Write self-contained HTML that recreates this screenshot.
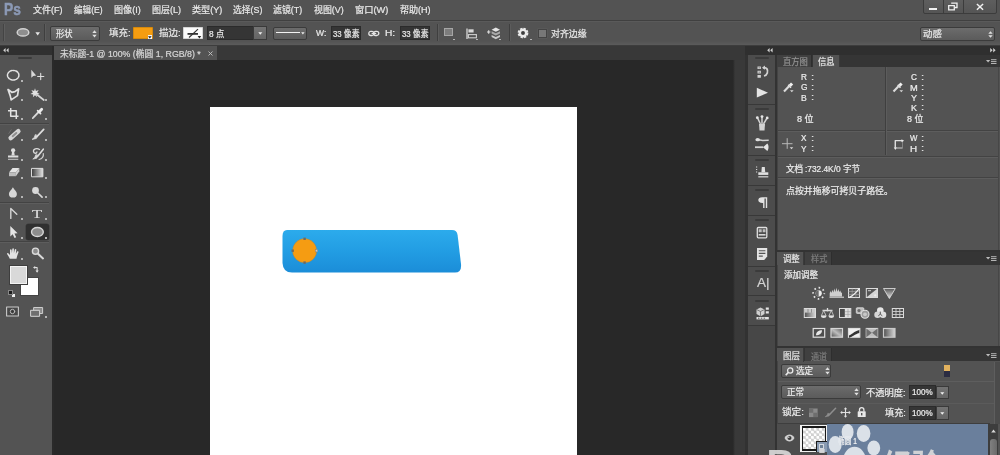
<!DOCTYPE html>
<html lang="zh-CN">
<head>
<meta charset="utf-8">
<title>Photoshop</title>
<style>
html,body{margin:0;padding:0;}
body{width:1000px;height:455px;overflow:hidden;background:#282828;position:relative;
 font-family:"Liberation Sans","Noto Sans CJK SC",sans-serif;font-size:9px;color:#e6e6e6;}
.a{position:absolute;box-sizing:border-box;}
.t{position:absolute;white-space:pre;line-height:40px;transform-origin:0 0;-webkit-text-stroke:0.22px currentColor;}
svg{position:absolute;overflow:visible;}
.dd{position:absolute;box-sizing:border-box;background:linear-gradient(#6c6c6c,#5b5b5b);border:1px solid #3b3b3b;border-radius:2px;}
.inp{position:absolute;box-sizing:border-box;background:#353535;border:1px solid #2b2b2b;}
.sep{position:absolute;width:1px;background:#3f3f3f;border-right:1px solid #5c5c5c;}
.hl{position:absolute;height:1px;background:#434343;border-bottom:1px solid #5d5d5d;}
.grip{position:absolute;height:2px;background:#3b3b3b;border-radius:1px;}
.dot{position:absolute;width:1.8px;height:1.8px;background:#b4b4b4;}
</style>
</head>
<body>
<div id="root" style="position:absolute;left:0;top:0;width:1000px;height:455px;overflow:hidden;will-change:transform;">
<!-- ===== base regions ===== -->
<div class="a" style="left:0;top:0;width:1000px;height:45px;background:#535353;"></div>
<div class="a" style="left:0;top:19.5px;width:1000px;height:1px;background:#404040;"></div>
<div class="a" style="left:0;top:20.5px;width:1000px;height:1px;background:#5a5a5a;"></div>
<div class="a" style="left:0;top:41px;width:1000px;height:3.5px;background:linear-gradient(#535353,#5b5b5b);"></div>
<div class="a" style="left:0;top:44.5px;width:1000px;height:1.5px;background:#3d3d3d;"></div>
<!-- doc tab bar -->
<div class="a" style="left:52px;top:46px;width:694px;height:14px;background:#383838;"></div>
<div class="a" style="left:54px;top:46px;width:163px;height:14px;background:#535353;"></div>
<!-- canvas scrollbar band -->
<div class="a" style="left:733px;top:60px;width:12px;height:395px;background:linear-gradient(90deg,#282828,#393939 2px,#393939);"></div>
<div class="a" style="left:745px;top:46px;width:4px;height:409px;background:#323232;"></div>
<!-- left toolbar -->
<div class="a" style="left:0;top:45.5px;width:52px;height:9.5px;background:#303030;"></div>
<div class="a" style="left:0;top:55px;width:51.5px;height:400px;background:#535353;"></div>
<div class="a" style="left:51.5px;top:46px;width:2.5px;height:409px;background:#2a2a2a;"></div>
<!-- document -->
<div class="a" style="left:209.8px;top:107px;width:367px;height:348px;background:#fff;"></div>
<!-- right dock -->
<div class="a" style="left:745px;top:45.5px;width:255px;height:9.5px;background:#2f2f2f;"></div>
<div class="a" style="left:748px;top:55px;width:26.6px;height:400px;background:#4c4c4c;"></div>
<div class="a" style="left:774.6px;top:55px;width:226px;height:400px;background:#333;"></div>

<!-- ===== menu bar ===== -->
<span class="t" style="left:4.39px;top:-10.25px;font-size:17px;color:#8c9ab6;transform:scaleX(0.8101);font-weight:bold;-webkit-text-stroke:0.5px currentColor;">Ps</span>
<span class="t" style="left:32.75px;top:-9.62px;font-size:9.2px;color:#e8e8e8;transform:scaleX(0.9831);">文件(F)</span>
<span class="t" style="left:73.77px;top:-9.62px;font-size:9.2px;color:#e8e8e8;transform:scaleX(0.9333);">编辑(E)</span>
<span class="t" style="left:113.76px;top:-9.62px;font-size:9.2px;color:#e8e8e8;transform:scaleX(0.9903);">图像(I)</span>
<span class="t" style="left:151.76px;top:-9.75px;font-size:9.2px;color:#e8e8e8;transform:scaleX(0.9825);">图层(L)</span>
<span class="t" style="left:191.50px;top:-9.62px;font-size:9.2px;color:#e8e8e8;transform:scaleX(0.9916);">类型(Y)</span>
<span class="t" style="left:233.02px;top:-9.62px;font-size:9.2px;color:#e8e8e8;transform:scaleX(0.9580);">选择(S)</span>
<span class="t" style="left:273.26px;top:-9.62px;font-size:9.2px;color:#e8e8e8;transform:scaleX(0.9661);">滤镜(T)</span>
<span class="t" style="left:313.76px;top:-9.62px;font-size:9.2px;color:#e8e8e8;transform:scaleX(0.9667);">视图(V)</span>
<span class="t" style="left:355.00px;top:-9.62px;font-size:9.2px;color:#e8e8e8;transform:scaleX(1.0078);">窗口(W)</span>
<span class="t" style="left:399.75px;top:-9.62px;font-size:9.2px;color:#e8e8e8;transform:scaleX(0.9836);">帮助(H)</span>
<!-- window buttons -->
<div class="a" style="left:923px;top:-1px;width:74px;height:14.5px;background:linear-gradient(#5e5e5e,#555);border:1px solid #3c3c3c;border-radius:0 0 2px 2px;"></div>
<div class="a" style="left:943px;top:0;width:1px;height:13px;background:#3c3c3c;"></div>
<div class="a" style="left:962.5px;top:0;width:1px;height:13px;background:#3c3c3c;"></div>
<div class="a" style="left:929px;top:8px;width:7.5px;height:2px;background:#f0f0f0;"></div>
<svg style="left:947px;top:2px;" width="12" height="10" viewBox="0 0 12 10"><path d="M4.2 1.2h5.8v4.3h-2M1.7 3.6h5.6v4.3h-5.6z" fill="none" stroke="#f0f0f0" stroke-width="1.3"/></svg>
<svg style="left:975px;top:3px;" width="10" height="8" viewBox="0 0 10 8"><path d="M1.9 1l6.2 5.8M8.1 1l-6.2 5.800" fill="none" stroke="#f0f0f0" stroke-width="1.5"/></svg>

<!-- ===== options bar ===== -->
<div class="a" style="left:3px;top:24px;width:1px;height:17px;background:#444;"></div>
<div class="a" style="left:4px;top:24px;width:1px;height:17px;background:#5e5e5e;"></div>
<svg style="left:15px;top:26px;" width="16" height="13" viewBox="0 0 16 13"><ellipse cx="8" cy="6.4" rx="5.8" ry="3.6" fill="#8e8e8e" stroke="#d2d2d2" stroke-width="1.5"/></svg>
<svg style="left:35px;top:31.5px;" width="6" height="4" viewBox="0 0 6 4"><path d="M0.4 0.3h4.6l-2.3 3.2z" fill="#e6e6e6"/></svg>
<div class="sep" style="left:44px;top:24px;height:17px;"></div>
<div class="dd" style="left:50px;top:26px;width:50px;height:14.5px;"></div>
<span class="t" style="left:55.77px;top:14.00px;font-size:9px;color:#e8e8e8;transform:scaleX(0.9143);">形状</span>
<svg style="left:91.5px;top:30px;" width="5" height="8" viewBox="0 0 5 8"><path d="M0.3 3l2.2-2.7 2.2 2.7zM0.3 4.8l2.2 2.7 2.2-2.7z" fill="#e0e0e0"/></svg>
<span class="t" style="left:108.74px;top:13.00px;font-size:9px;color:#e8e8e8;transform:scaleX(1.0513);">填充:</span>
<div class="a" style="left:133px;top:26.5px;width:19.5px;height:12.5px;background:#f59d11;box-shadow:inset 0 0 0 0.5px rgba(60,40,0,.35);"></div>
<div class="a" style="left:147.5px;top:35px;width:4.5px;height:3.5px;background:#f4f4f4;"></div>
<svg style="left:148px;top:35.5px;" width="4" height="3" viewBox="0 0 4 3"><path d="M0 0.2h3.6l-1.8 2.4z" fill="#222"/></svg>
<span class="t" style="left:158.74px;top:13.00px;font-size:9px;color:#e8e8e8;transform:scaleX(1.0513);">描边:</span>
<div class="a" style="left:183px;top:26.5px;width:19.5px;height:12.5px;background:#fbfbfb;box-shadow:inset 0 0 0 0.5px rgba(0,0,0,.3);"></div>
<svg style="left:184px;top:27.5px;" width="18" height="11" viewBox="0 0 18 11"><path d="M3.5 5h10.5v1.8h-10.5z" fill="#333"/><path d="M5 9.5L14 1.2" stroke="#333" stroke-width="1.1" fill="none"/><path d="M13.6 8h3.6l-1.8 2.4z" fill="#222"/></svg>
<div class="inp" style="left:207px;top:25.5px;width:46.5px;height:14.5px;"></div>
<span class="t" style="left:209.27px;top:14.00px;font-size:9px;color:#e8e8e8;transform:scaleX(0.9206);">8 点</span>
<div class="a" style="left:253px;top:26px;width:13.5px;height:13.5px;background:linear-gradient(#737373,#666);border:1px solid #3a3a3a;"></div>
<svg style="left:257.5px;top:31.8px;" width="5" height="3" viewBox="0 0 5 3"><path d="M0.3 0.2h4l-2 2.5z" fill="#f0f0f0"/></svg>
<div class="dd" style="left:272.5px;top:26.5px;width:34px;height:13.5px;"></div>
<div class="a" style="left:275.5px;top:31.8px;width:24.5px;height:1.6px;background:#f2f2f2;"></div>
<svg style="left:300.8px;top:32px;" width="4" height="3" viewBox="0 0 4 3"><path d="M0.2 0.2h3.4l-1.7 2.2z" fill="#eee"/></svg>
<span class="t" style="left:315.50px;top:12.62px;font-size:9px;color:#e8e8e8;transform:scaleX(0.9500);">W:</span>
<div class="inp" style="left:330.5px;top:25.5px;width:30px;height:14.5px;overflow:hidden;"></div>
<span class="t" style="left:333.28px;top:13.80px;font-size:9px;color:#e8e8e8;transform:scaleX(0.8667);">33 像素</span>
<svg style="left:367.5px;top:30px;" width="12" height="7" viewBox="0 0 12 7"><rect x="0.8" y="1.3" width="5.2" height="4.2" rx="2.1" fill="none" stroke="#e4e4e4" stroke-width="1.3"/><rect x="5.6" y="1.3" width="5.2" height="4.2" rx="2.1" fill="none" stroke="#e4e4e4" stroke-width="1.3"/><path d="M3.6 3.4h4.6" stroke="#e4e4e4" stroke-width="1.2"/></svg>
<span class="t" style="left:385.15px;top:12.62px;font-size:9px;color:#e8e8e8;transform:scaleX(1.1333);">H:</span>
<div class="inp" style="left:399.5px;top:25.5px;width:30px;height:14.5px;overflow:hidden;"></div>
<span class="t" style="left:402.28px;top:13.80px;font-size:9px;color:#e8e8e8;transform:scaleX(0.8667);">33 像素</span>
<div class="sep" style="left:437px;top:24px;height:17px;"></div>
<div class="a" style="left:444px;top:28px;width:9px;height:8px;background:#7d7d7d;border:1px solid #a6a6a6;"></div>
<div class="dot" style="left:453px;top:38.5px;width:1.6px;height:1.6px;"></div>
<svg style="left:465.5px;top:27.5px;" width="12" height="12" viewBox="0 0 12 12"><path d="M1 0.5v10.5" stroke="#cfcfcf" stroke-width="1.4"/><rect x="2.4" y="1.3" width="5.2" height="3.2" fill="#d8d8d8"/><rect x="2.4" y="6.6" width="8" height="3.2" fill="none" stroke="#cfcfcf" stroke-width="1.1"/></svg>
<div class="dot" style="left:476px;top:38.5px;width:1.6px;height:1.6px;"></div>
<svg style="left:486px;top:27px;" width="15" height="13" viewBox="0 0 15 13"><path d="M1 5h3.4M2.7 3.3v3.4" stroke="#e0e0e0" stroke-width="1.1"/><path d="M9.8 0.6l4.2 2.1-4.2 2.1-4.2-2.1z" fill="#e4e4e4"/><path d="M5.6 4.2l4.2 2.1 4.2-2.1v2.2l-4.2 2.1-4.2-2.1z" fill="#a9a9a9"/><path d="M5.6 7.9l4.2 2.1 4.2-2.1v2.2l-4.2 2.1-4.2-2.1z" fill="#c9c9c9"/></svg>
<div class="dot" style="left:499px;top:38.5px;width:1.6px;height:1.6px;"></div>
<div class="sep" style="left:508.5px;top:24px;height:17px;"></div>
<svg style="left:517px;top:27px;" width="12" height="12" viewBox="0 0 12 12"><circle cx="6" cy="6" r="4.1" fill="none" stroke="#e9e9e9" stroke-width="2.6" stroke-dasharray="2.1 1.12"/><circle cx="6" cy="6" r="3.2" fill="none" stroke="#e9e9e9" stroke-width="2.4"/><circle cx="6" cy="6" r="1.4" fill="#3c3c3c"/></svg>
<div class="dot" style="left:530px;top:38.5px;width:1.6px;height:1.6px;"></div>
<div class="a" style="left:538px;top:28.5px;width:9px;height:9px;background:#777;border:1px solid #444;box-shadow:0 0 0 0.5px #5e5e5e;"></div>
<span class="t" style="left:550.50px;top:14.00px;font-size:9px;color:#e8e8e8;transform:scaleX(0.9929);">对齐边缘</span>
<div class="dd" style="left:919.5px;top:27px;width:75px;height:13.5px;"></div>
<span class="t" style="left:923.48px;top:14.00px;font-size:9px;color:#e8e8e8;transform:scaleX(1.0435);">动感</span>
<svg style="left:987.5px;top:30.5px;" width="5" height="7" viewBox="0 0 5 7"><path d="M0.3 2.7l2.2-2.4 2.2 2.4zM0.3 4.3l2.2 2.4 2.2-2.4z" fill="#e0e0e0"/></svg>

<!-- ===== document tab ===== -->
<span class="t" style="left:60.26px;top:33.88px;font-size:9px;color:#d6d6d6;transform:scaleX(0.9757);">未标题-1 @ 100% (椭圆 1, RGB/8) *</span>
<svg style="left:207.5px;top:50.5px;" width="5" height="5" viewBox="0 0 5 5"><path d="M0.5 0.5l4 4M4.5 0.5l-4 4" stroke="#c4c4c4" stroke-width="0.9" fill="none"/></svg>
<!-- collapse arrows -->
<svg style="left:3px;top:48px;" width="6" height="5" viewBox="0 0 6 5"><path d="M2.6 0v4.6l-2.4-2.3zM5.6 0v4.6l-2.4-2.3z" fill="#d0d0d0"/></svg>
<svg style="left:766.8px;top:48px;" width="6" height="5" viewBox="0 0 6 5"><path d="M2.6 0v4.6l-2.4-2.3zM5.6 0v4.6l-2.4-2.3z" fill="#d0d0d0"/></svg>
<svg style="left:990px;top:48px;" width="6" height="5" viewBox="0 0 6 5"><path d="M0.2 0v4.6l2.4-2.3zM3.2 0v4.6l2.4-2.3z" fill="#d0d0d0"/></svg>

<!-- ===== tools ===== -->
<div class="grip" style="left:18px;top:57px;width:14px;"></div>
<div class="hl" style="left:0;top:123px;width:49px;"></div>
<div class="hl" style="left:0;top:202px;width:49px;"></div>
<div class="hl" style="left:0;top:241px;width:49px;"></div>
<!-- selected tool bg -->
<div class="a" style="left:26px;top:223.5px;width:22.5px;height:16.5px;background:#303030;border-radius:2.5px;box-shadow:0 0 0 0.5px #3d3d3d;"></div>
<svg style="left:0;top:55px;" width="52" height="270" viewBox="0 55 52 270" fill="none" stroke-linecap="round" stroke-linejoin="round">
 <!-- elliptical marquee -->
 <ellipse cx="13.2" cy="75.2" rx="5.7" ry="4.8" stroke="#e2e2e2" stroke-width="1.5" stroke-dasharray="2 1"/>
 <!-- move -->
 <path d="M31.3 69.8v8l2-1.9 2.9-.3z" fill="#d8d8d8" stroke="none"/>
 <path d="M37.6 76.5h6.2M40.7 73.4v6.2" stroke="#dedede" stroke-width="1.1"/>
 <!-- polygonal lasso -->
 <path d="M8 89.5l3.8 2.8 3.2-.6 3.6-2.9-1.1 6.8-6.300 4.300-1.1-4.500z" stroke="#e0e0e0" stroke-width="1.7"/>
 <!-- magic wand -->
 <path d="M35 88.200l.9 2.800 2.800-1-1.600 2.500 2.500 1.500-2.900.400.300 2.900-2-2.100-2.100 2.100.400-2.900-2.900-.400 2.500-1.500-1.500-2.500 2.700 1z" fill="#e0e0e0" stroke="none"/>
 <path d="M37.500 95l6.300 5" stroke="#d6d6d6" stroke-width="1.700"/>
 <!-- crop -->
 <path d="M10.700 108v8.300h7.800M8 110.800h8.300v8.200" stroke="#e2e2e2" stroke-width="1.500" stroke-linecap="butt"/>
 <!-- eyedropper -->
 <path d="M33 117.800l5.600-5.800" stroke="#d8d8d8" stroke-width="1.800"/>
 <path d="M32.400 118.600l1.200-1.200" stroke="#d8d8d8" stroke-width="1"/>
 <path d="M37.600 110.600l3 3" stroke="#e6e6e6" stroke-width="1.600"/>
 <path d="M39.300 111.700l2.400-2.500" stroke="#ececec" stroke-width="2.800"/>
 <!-- healing brush -->
 <path d="M10.700 138l7.600-6.800" stroke="#d4d4d4" stroke-width="4.600"/>
 <path d="M12.700 136.200l3.600-3.200" stroke="#8f8f8f" stroke-width="2"/>
 <path d="M8.800 133.500l2.400-3.800" stroke="#6c6c6c" stroke-width="1"/>
 <!-- brush -->
 <path d="M43.700 129.300l-6.800 7.400" stroke="#dcdcdc" stroke-width="1.700"/>
 <path d="M37.600 136l-1.300 2.500-4.200.900 2.200-1.900.900-2.600z" fill="#dcdcdc" stroke="#dcdcdc" stroke-width=".8"/>
 <!-- stamp -->
 <circle cx="13.100" cy="150.300" r="2.100" fill="#dedede" stroke="none"/>
 <path d="M12.100 151.500h2l.700 4h-3.400z" fill="#dedede" stroke="none"/>
 <path d="M8 155.500h10.300v2h-10.300z" fill="#dedede" stroke="none"/>
 <path d="M8 159.300h10.300" stroke="#c4c4c4" stroke-width="1.100" stroke-linecap="butt"/>
 <!-- history brush -->
 <path d="M39.500 149.500c-2.600-1.600-6.400-.600-6 2.200.300 2 3.300 2 3.400.300" stroke="#dcdcdc" stroke-width="1.300"/>
 <path d="M43.300 149.200l-5.600 7" stroke="#dcdcdc" stroke-width="1.600"/>
 <path d="M38 155.600l-1.200 2.600-4 .900 2.100-1.900.800-2.300z" fill="#dcdcdc" stroke="#dcdcdc" stroke-width=".7"/>
 <path d="M43.300 153.500c.600 3-1.200 5.400-4.300 6" stroke="#cfcfcf" stroke-width="1.200"/>
 <!-- eraser -->
 <path d="M12.500 168l6.800 0-3.400 4.600h-6.900z" fill="#e4e4e4" stroke="none"/>
 <path d="M9 172.600h6.900v3.600h-6.900z" fill="#bdbdbd" stroke="none"/>
 <path d="M15.900 172.600l3.400-4.600v3.200l-3.400 5z" fill="#d0d0d0" stroke="none"/>
 <!-- gradient -->
 <defs><linearGradient id="gr1" x1="0" x2="1" y1="0" y2="0"><stop offset="0" stop-color="#404040"/><stop offset="1" stop-color="#e4e4e4"/></linearGradient></defs>
 <rect x="31.900" y="168.400" width="11" height="8.400" fill="url(#gr1)" stroke="#dcdcdc" stroke-width="1"/>
 <!-- blur drop -->
 <path d="M12.900 187.200c1.600 2.800 4 4.400 4 6.700a4 3.600 0 0 1-8 0c0-2.300 2.500-3.900 4-6.700z" fill="#d6d6d6" stroke="none"/>
 <!-- dodge -->
 <circle cx="35.500" cy="190.500" r="3.400" fill="#d8d8d8" stroke="none"/>
 <path d="M37.800 193l4.300 4.200" stroke="#d8d8d8" stroke-width="1.700"/>
 <!-- pen -->
 <path d="M10.800 218.400v-10l6 5.800" stroke="#d6d6d6" stroke-width="1.400"/>
 <!-- path selection arrow -->
 <path d="M10.300 226v10.500l2.400-2.300 1.800 3.800 1.700-.800-1.800-3.700 3.200-.300z" fill="#e4e4e4" stroke="none"/>
 <!-- ellipse tool (selected) -->
 <ellipse cx="37.400" cy="232" rx="5.900" ry="4.500" fill="#8c8c8c" stroke="#d6d6d6" stroke-width="1.400"/>
 <!-- hand -->
 <path d="M9.800 258.800c-1-2-2-3.400-2.700-4.700-.400-.900.700-1.500 1.400-.700l1.500 1.700v-5c0-1 1.500-1 1.600 0l.300 3.200.400-4.200c.100-1 1.600-1 1.600 0v4.200l.900-3.700c.200-1 1.700-.700 1.500.300l-.500 4.100 1.300-2.400c.500-.900 1.800-.300 1.400.600-.900 2.200-1.500 4.200-2 6.600z" fill="#e2e2e2" stroke="none"/>
 <!-- zoom -->
 <circle cx="35.500" cy="251.200" r="3.100" fill="#8d8d8d" stroke="#dadada" stroke-width="1.400"/>
 <path d="M38 253.800l5 4.600" stroke="#dadada" stroke-width="2"/>
 <!-- swap arrows -->
 <path d="M34.500 267.500h2.600v3.800" stroke="#e0e0e0" stroke-width="1.100" stroke-linecap="butt"/>
 <path d="M35.200 265.900v3.200l-2.200-1.600zM35.500 270.600h3.200l-1.600 2.200z" fill="#e0e0e0" stroke="none"/>
 <!-- quick mask -->
 <rect x="6.600" y="307" width="11.800" height="9" fill="#484848" stroke="#c9c9c9" stroke-width="1.100"/>
 <circle cx="12.500" cy="311.500" r="2.200" fill="#3a3a3a" stroke="#bdbdbd" stroke-width="1"/>
 <!-- screen mode -->
 <rect x="34" y="307.500" width="8.600" height="6" fill="#8a8a8a" stroke="#cdcdcd" stroke-width="1"/>
 <rect x="31" y="310.300" width="8.600" height="6" fill="#6f6f6f" stroke="#d6d6d6" stroke-width="1"/>
</svg>
<span class="t" style="left:32.19px;top:193.50px;font-size:13.5px;color:#dedede;transform:scaleX(1.2258);font-family:'Liberation Serif','Noto Serif CJK SC',serif;">T</span>
<!-- fg / bg swatches -->
<div class="a" style="left:19.600px;top:277px;width:19.400px;height:19.400px;background:#fff;border:1px solid #444;"></div>
<div class="a" style="left:8.700px;top:265.200px;width:19.500px;height:19.500px;background:#d9d9d9;border:1px solid #3e3e3e;box-shadow:inset 0 0 0 1px #f4f4f4;"></div>
<div class="a" style="left:10.800px;top:292.600px;width:5.200px;height:5.200px;background:#ededed;border:0.500px solid #555;"></div>
<div class="a" style="left:8px;top:290px;width:4.500px;height:4.500px;background:#1c1c1c;border:0.500px solid #888;"></div>
<!-- flyout dots -->
<div class="dot" style="left:21.300px;top:80.300px;"></div><div class="dot" style="left:21.300px;top:99.300px;"></div><div class="dot" style="left:45.300px;top:99.300px;"></div>
<div class="dot" style="left:21.300px;top:118.300px;"></div><div class="dot" style="left:45.300px;top:118.300px;"></div>
<div class="dot" style="left:21.300px;top:139.300px;"></div><div class="dot" style="left:45.300px;top:139.300px;"></div>
<div class="dot" style="left:21.300px;top:158.800px;"></div><div class="dot" style="left:45.300px;top:158.800px;"></div>
<div class="dot" style="left:21.300px;top:177.300px;"></div><div class="dot" style="left:45.300px;top:177.300px;"></div>
<div class="dot" style="left:21.300px;top:196.300px;"></div><div class="dot" style="left:45.300px;top:196.300px;"></div>
<div class="dot" style="left:21.300px;top:217.800px;"></div><div class="dot" style="left:45.300px;top:217.800px;"></div>
<div class="dot" style="left:21.300px;top:237.300px;"></div><div class="dot" style="left:45.300px;top:237.300px;"></div>
<div class="dot" style="left:21.300px;top:258.300px;"></div><div class="dot" style="left:45.300px;top:316.300px;"></div>

<!-- ===== canvas artwork ===== -->
<svg style="left:270px;top:220px;" width="200" height="60" viewBox="270 220 200 60">
 <defs><linearGradient id="bl" x1="0" x2="0" y1="0" y2="1"><stop offset="0" stop-color="#2cabec"/><stop offset="0.5" stop-color="#229de3"/><stop offset="1" stop-color="#1b8dd8"/></linearGradient></defs>
 <path d="M287 230L452 230Q457 230 457.600 235L461 264Q461.800 272.600 455 272.600L292 272.600Q283 272.600 282.500 263L282.500 236Q282.500 230 287 230Z" fill="url(#bl)"/>
 <circle cx="304.600" cy="250.700" r="12.100" fill="#f59c12"/>
 <circle cx="304.600" cy="250.700" r="12.100" fill="none" stroke="#8a7a5a" stroke-width=".5" stroke-opacity=".7"/>
 <rect x="303.400" y="237.600" width="2.400" height="2.400" fill="#6e6a62"/>
 <rect x="303.400" y="261.400" width="2.400" height="2.400" fill="#6e6a62"/>
 <rect x="291.500" y="249.500" width="2.400" height="2.400" fill="#6e6a62"/>
 <rect x="315.300" y="249.500" width="2.400" height="2.400" fill="#c9c9c9" stroke="#777" stroke-width=".4"/>
</svg>

<!-- ===== right icon strip ===== -->
<div class="grip" style="left:755px;top:57px;width:14px;"></div>
<div class="a" style="left:748px;top:103.500px;width:26.6px;height:1px;background:#383838;"></div><div class="grip" style="left:755px;top:107.500px;width:14px;"></div>
<div class="a" style="left:748px;top:155px;width:26.6px;height:1px;background:#383838;"></div><div class="grip" style="left:755px;top:159px;width:14px;"></div>
<div class="a" style="left:748px;top:185px;width:26.6px;height:1px;background:#383838;"></div><div class="grip" style="left:755px;top:189px;width:14px;"></div>
<div class="a" style="left:748px;top:215px;width:26.6px;height:1px;background:#383838;"></div><div class="grip" style="left:755px;top:219px;width:14px;"></div>
<div class="a" style="left:748px;top:266px;width:26.6px;height:1px;background:#383838;"></div><div class="grip" style="left:755px;top:270px;width:14px;"></div>
<div class="a" style="left:748px;top:295px;width:26.6px;height:1px;background:#383838;"></div><div class="grip" style="left:755px;top:299.500px;width:14px;"></div>
<div class="a" style="left:748px;top:325px;width:26.6px;height:130px;background:#474747;border-top:1px solid #383838;"></div>
<svg style="left:748px;top:55px;" width="27" height="275" viewBox="748 55 27 275" fill="none">
 <!-- history -->
 <path d="M757.500 66.500h3.400v2.600h-3.400zM757.500 70.800h3.400v2.600h-3.400zM757.500 75.100h3.400v2.600h-3.400z" fill="#d2d2d2"/>
 <path d="M758.600 67.400h1.200v.900h-1.200zM758.600 71.700h1.200v.900h-1.200z" fill="#555"/>
 <path d="M763 67.800c3.800-.800 5.300 2 4.300 5.200-.500 1.600-1.700 2.600-3.300 3" stroke="#d2d2d2" stroke-width="1.800"/>
 <path d="M762 67.700l3-2.200v4.300z" fill="#d2d2d2"/>
 <!-- actions (play) -->
 <path d="M756.800 87.800v9.800l11.200-4.900z" fill="#e4e4e4"/>
 <!-- brush presets -->
 <path d="M759 124h6l-.500 6.500h-5z" fill="#d2d2d2"/>
 <path d="M760.200 123.500l-2.700-5.600M762 123.500v-6.500M763.800 123.500l3.200-5.300" stroke="#d2d2d2" stroke-width="1.500" stroke-linecap="round"/>
 <circle cx="757.300" cy="117.700" r="1.400" fill="#e6e6e6"/><circle cx="762" cy="116.600" r="1.400" fill="#e6e6e6"/><circle cx="767.200" cy="117.900" r="1.400" fill="#e6e6e6"/>
 <!-- brush -->
 <path d="M757 139.600c2.400.200 3.600.700 5.700.800l6-.100" stroke="#d2d2d2" stroke-width="1.500"/><ellipse cx="757.700" cy="139.700" rx="2.300" ry="1.600" fill="#dedede"/>
 <path d="M755 147.200h8.200" stroke="#d2d2d2" stroke-width="1.800"/>
 <path d="M763 147.200l4.300-3.700c1.600 1.600 1.600 5.800 0 7.400z" fill="#e4e4e4"/>
 <!-- clone source -->
 <path d="M756 166.500h1.200v1.100h-1.200zM756 169h1.200v1.100h-1.200zM756 171.500h1.200v1.100h-1.200z" fill="#d6d6d6"/>
 <path d="M761.800 167h3l.400 5.300h-3.800z" fill="#e0e0e0"/>
 <path d="M758.300 172.300h10v2.600h-10z" fill="#e0e0e0"/>
 <path d="M758.300 176.800h10" stroke="#cfcfcf" stroke-width="1.300"/>
 <!-- paragraph -->
 <path d="M762.600 197.300h4.600v10.700h-1.400v-9.400h-1.300v9.400h-1.400v-5c-3.400.200-4.800-1.200-4.800-2.900 0-1.700 1.400-2.900 4.300-2.800z" fill="#e2e2e2"/>
 <!-- layer comps -->
 <rect x="757.300" y="227.500" width="9.500" height="10.300" rx="1" stroke="#e0e0e0" stroke-width="1.300"/>
 <path d="M758.700 229.200h3v3h-3zM762.700 229.200h2.800v3h-2.800z" fill="#bdbdbd"/>
 <path d="M758.700 234.800h6.800" stroke="#e0e0e0" stroke-width="1.500"/>
 <!-- notes -->
 <path d="M757 248h10.200v8.500l-3 3.500h-7.200z" fill="#e4e4e4"/>
 <path d="M758.800 250.700h6.600M758.800 253.400h6.600M758.800 256.100h4" stroke="#555" stroke-width="1.100"/>
 <!-- 3D / properties -->
 <path d="M760.500 307.500l4 2v4.600l-4 2.200-4-2.200v-4.600z" fill="#cfcfcf"/>
 <path d="M756.500 309.500l4 2 4-2M760.500 311.500v4.800" stroke="#666" stroke-width=".8"/>
 <path d="M765.800 307.500h3v2.300h-3zM765.800 311.300h3v2.300h-3z" fill="#e4e4e4"/>
 <path d="M756.500 317h12.300v2.400h-12.300z" fill="#e4e4e4"/>
 <path d="M758 318.200h1.500M760.800 318.200h1.500M763.600 318.200h1.500" stroke="#555" stroke-width="1"/>
</svg>
<span class="t" style="left:757.00px;top:263.38px;font-size:13.5px;color:#d2d2d2;transform:scaleX(1.0000);">A|</span>

<!-- ===== info panel ===== -->
<div class="a" style="left:776.500px;top:55px;width:223.500px;height:195px;background:#535353;"></div>
<div class="a" style="left:776.500px;top:55px;width:223.500px;height:11.500px;background:#353535;"></div>
<div class="a" style="left:776.500px;top:55px;width:35.500px;height:11.500px;background:#404040;border-right:1px solid #2e2e2e;"></div>
<div class="a" style="left:812.500px;top:55px;width:27px;height:12px;background:#535353;border-right:1px solid #3a3a3a;"></div>
<span class="t" style="left:783.26px;top:41.88px;font-size:8.8px;color:#929292;transform:scaleX(0.9412);">直方图</span>
<span class="t" style="left:817.76px;top:41.88px;font-size:8.8px;color:#e4e4e4;transform:scaleX(0.9412);">信息</span>
<svg style="left:986px;top:58.500px;" width="11" height="6" viewBox="0 0 11 6"><path d="M0 1h4.200l-2.100 2.600z" fill="#bcbcbc"/><path d="M5 .700h5.500M5 2.600h5.500M5 4.500h5.500" stroke="#b4b4b4" stroke-width="1"/></svg>
<!-- dividers -->
<div class="hl" style="left:777px;top:130px;width:221px;"></div>
<div class="hl" style="left:777px;top:155.500px;width:221px;"></div>
<div class="hl" style="left:777px;top:177px;width:221px;"></div>
<div class="sep" style="left:884.500px;top:67px;height:88px;"></div>
<div class="a" style="left:998px;top:67px;width:1px;height:183px;background:#474747;"></div>
<!-- left column -->
<span class="t" style="left:801.02px;top:57.30px;font-size:8.6px;color:#ececec;transform:scaleX(0.9524);">R</span><span class="t" style="left:810.53px;top:57.17px;font-size:8.6px;color:#e0e0e0;transform:scaleX(1.3000);">:</span>
<span class="t" style="left:800.76px;top:67.38px;font-size:8.6px;color:#ececec;transform:scaleX(0.9667);">G</span><span class="t" style="left:810.53px;top:67.38px;font-size:8.6px;color:#e0e0e0;transform:scaleX(1.3000);">:</span>
<span class="t" style="left:801.00px;top:77.50px;font-size:8.6px;color:#ececec;transform:scaleX(1.0000);">B</span><span class="t" style="left:810.53px;top:77.38px;font-size:8.6px;color:#e0e0e0;transform:scaleX(1.3000);">:</span>
<span class="t" style="left:797.24px;top:98.75px;font-size:8.6px;color:#ececec;transform:scaleX(1.0492);">8 位</span>
<span class="t" style="left:801.26px;top:118.30px;font-size:8.6px;color:#ececec;transform:scaleX(0.9524);">X</span><span class="t" style="left:810.53px;top:118.18px;font-size:8.6px;color:#e0e0e0;transform:scaleX(1.3000);">:</span>
<span class="t" style="left:801.26px;top:128.50px;font-size:8.6px;color:#ececec;transform:scaleX(0.9524);">Y</span><span class="t" style="left:810.53px;top:128.38px;font-size:8.6px;color:#e0e0e0;transform:scaleX(1.3000);">:</span>
<!-- right column -->
<span class="t" style="left:911.26px;top:57.17px;font-size:8.6px;color:#ececec;transform:scaleX(0.9565);">C</span><span class="t" style="left:921.03px;top:57.17px;font-size:8.6px;color:#e0e0e0;transform:scaleX(1.3000);">:</span>
<span class="t" style="left:909.96px;top:67.50px;font-size:8.6px;color:#ececec;transform:scaleX(1.0833);">M</span><span class="t" style="left:921.03px;top:67.38px;font-size:8.6px;color:#e0e0e0;transform:scaleX(1.3000);">:</span>
<span class="t" style="left:911.24px;top:77.50px;font-size:8.6px;color:#ececec;transform:scaleX(1.0476);">Y</span><span class="t" style="left:921.03px;top:77.38px;font-size:8.6px;color:#e0e0e0;transform:scaleX(1.3000);">:</span>
<span class="t" style="left:910.98px;top:87.50px;font-size:8.6px;color:#ececec;transform:scaleX(1.0476);">K</span><span class="t" style="left:921.03px;top:87.38px;font-size:8.6px;color:#e0e0e0;transform:scaleX(1.3000);">:</span>
<span class="t" style="left:907.34px;top:98.55px;font-size:8.6px;color:#ececec;transform:scaleX(1.0361);">8 位</span>
<span class="t" style="left:909.50px;top:118.30px;font-size:8.6px;color:#ececec;transform:scaleX(0.9091);">W</span><span class="t" style="left:921.03px;top:118.18px;font-size:8.6px;color:#e0e0e0;transform:scaleX(1.3000);">:</span>
<span class="t" style="left:910.43px;top:128.50px;font-size:8.6px;color:#ececec;transform:scaleX(1.1429);">H</span><span class="t" style="left:921.03px;top:128.38px;font-size:8.6px;color:#e0e0e0;transform:scaleX(1.3000);">:</span>
<span class="t" style="left:785.76px;top:149.38px;font-size:8.8px;color:#ececec;transform:scaleX(0.9731);">文档</span><span class="t" style="left:805.27px;top:149.20px;font-size:8.6px;color:#ececec;transform:scaleX(0.9678);">:732.4K/0</span><span class="t" style="left:842.72px;top:149.38px;font-size:8.8px;color:#ececec;transform:scaleX(0.9612);">字节</span>
<span class="t" style="left:785.75px;top:171.38px;font-size:8.8px;color:#ececec;transform:scaleX(1.0125);">点按并拖移可拷贝子路径。</span>
<!-- icons -->
<svg style="left:782px;top:82px;" width="14" height="12" viewBox="782 82 14 12" fill="none"><path d="M784.0 91.5l5-5.200" stroke="#dcdcdc" stroke-width="2.100"/><path d="M788.2 84.9l2.800 2.800" stroke="#e4e4e4" stroke-width="1.500"/><path d="M789.9 85.8l2.200-2.300" stroke="#f0f0f0" stroke-width="3"/><path d="M790.0 90.3h3.600l-1.800 2z" fill="#d8d8d8"/></svg>
<svg style="left:892px;top:82px;" width="14" height="12" viewBox="892 82 14 12" fill="none"><path d="M893.5 91.5l5-5.200" stroke="#dcdcdc" stroke-width="2.100"/><path d="M897.7 84.9l2.800 2.800" stroke="#e4e4e4" stroke-width="1.500"/><path d="M899.4 85.8l2.200-2.300" stroke="#f0f0f0" stroke-width="3"/><path d="M899.5 90.3h3.600l-1.800 2z" fill="#d8d8d8"/></svg>
<svg style="left:781px;top:137px;" width="14" height="14" viewBox="781 137 14 14" fill="none"><path d="M782 143.700h10.500M787.200 138.200v10.600" stroke="#b8b8b8" stroke-width="1"/><path d="M789.700 147.300h3.600l-1.800 2z" fill="#d6d6d6"/></svg>
<svg style="left:892px;top:137px;" width="14" height="15" viewBox="892 137 14 15" fill="none"><path d="M895.300 148v-7.300h7M895.300 148h7.200v-7.300" stroke="#cfcfcf" stroke-width="1" stroke-dasharray="7.300 7 0 0"/><path d="M895.300 148v-7.300h7.200" stroke="#e0e0e0" stroke-width="1.200"/><path d="M895.300 148h7.200v-7.300" stroke="#8e8e8e" stroke-width=".8"/><path d="M901.500 139.200l2.600 1.500-2.600 1.500zM893.800 147.500h3l-1.500 2.500z" fill="#ececec"/></svg>
<div class="a" style="left:776.500px;top:66.5px;width:0.800px;height:183.5px;background:#444;"></div>

<!-- ===== adjustments panel ===== -->
<div class="a" style="left:776.500px;top:252px;width:223.500px;height:94px;background:#535353;"></div>
<div class="a" style="left:776.500px;top:252px;width:223.500px;height:12.500px;background:#353535;"></div>
<div class="a" style="left:776.500px;top:252px;width:27.500px;height:13px;background:#535353;border-right:1px solid #3a3a3a;"></div>
<div class="a" style="left:804.500px;top:252px;width:27px;height:12.500px;background:#404040;border-right:1px solid #2e2e2e;"></div>
<span class="t" style="left:783.26px;top:239.38px;font-size:8.8px;color:#e4e4e4;transform:scaleX(0.9412);">调整</span>
<span class="t" style="left:810.77px;top:239.38px;font-size:8.8px;color:#7c7c7c;transform:scaleX(0.9275);">样式</span>
<svg style="left:986px;top:256px;" width="11" height="6" viewBox="0 0 11 6"><path d="M0 1h4.200l-2.100 2.600z" fill="#bcbcbc"/><path d="M5 .700h5.500M5 2.600h5.500M5 4.500h5.500" stroke="#b4b4b4" stroke-width="1"/></svg>
<span class="t" style="left:784.26px;top:254.88px;font-size:8.8px;color:#ececec;transform:scaleX(0.9640);">添加调整</span>
<div class="a" style="left:998px;top:265px;width:1px;height:81px;background:#474747;"></div>
<svg style="left:800px;top:285px;" width="110" height="56" viewBox="800 285 110 56" fill="none">
 <defs>
  <linearGradient id="gh" x1="0" x2="1" y1="0" y2="0"><stop offset="0" stop-color="#505050"/><stop offset="1" stop-color="#d8d8d8"/></linearGradient>
  <linearGradient id="gd" x1="0" x2="1" y1="1" y2="0"><stop offset="0" stop-color="#4a4a4a"/><stop offset=".5" stop-color="#bdbdbd"/><stop offset="1" stop-color="#5a5a5a"/></linearGradient>
  <linearGradient id="gv" x1="0" x2="0" y1="0" y2="1"><stop offset="0" stop-color="#555"/><stop offset="1" stop-color="#e6e6e6"/></linearGradient>
 </defs>
 <!-- row 1 -->
 <circle cx="818.700" cy="293.300" r="3.100" fill="#ececec"/><path d="M818.700 290.200a3.100 3.100 0 0 0 0 6.200z" fill="#6a6a6a"/>
 <circle cx="818.700" cy="293.300" r="5.600" stroke="#e6e6e6" stroke-width="1.700" stroke-dasharray="1.600 2.798" stroke-dashoffset=".8"/>
 <path d="M829.700 296.500v-3.500l1-2 .800 2 .900-3.300 1 2.800.900-4 1.100 3.500 1-4.300 1 4 1-2.800.900 3 1-1.400.900 2.500.800-.800v4.300z" fill="#cfcfcf"/>
 <path d="M829.500 297.200h14.500" stroke="#e4e4e4" stroke-width="1"/>
 <rect x="848.500" y="288.500" width="11" height="9" fill="#5e5e5e" stroke="#dcdcdc" stroke-width="1"/>
 <path d="M852.200 288.500v9M855.900 288.500v9M848.500 291.500h11M848.500 294.500h11" stroke="#a5a5a5" stroke-width=".6"/>
 <path d="M848.500 297.500c4-.500 6-3.500 11-9" stroke="#f2f2f2" stroke-width="1.200"/>
 <rect x="866.300" y="288.500" width="11.200" height="9" fill="#555" stroke="#dcdcdc" stroke-width="1"/>
 <path d="M866.300 297.500l11.200-9v9z" fill="#d4d4d4"/>
 <path d="M868 290.700h3M874 295.300h2.400M875.200 294.100v2.400" stroke="#efefef" stroke-width=".8"/>
 <path d="M883.500 288.500h11.800l-5.900 10z" fill="url(#gv)" stroke="#d8d8d8" stroke-width=".9"/>
 <!-- row 2 -->
 <rect x="804.300" y="308.500" width="11.200" height="9" fill="url(#gh)" stroke="#dcdcdc" stroke-width="1"/>
 <rect x="804.800" y="309" width="10.200" height="3.600" fill="#c9c9c9"/><path d="M808 309v3.600M811.500 309v3.600" stroke="#777" stroke-width=".7"/>
 <path d="M822.500 310.500h10M827.500 308v3.500" stroke="#dcdcdc" stroke-width="1.300"/>
 <path d="M823.700 310.500l-2.400 5.300h4.800zM831.300 310.500l-2.400 5.300h4.800z" stroke="#d0d0d0" stroke-width=".8"/>
 <path d="M821 315.800a2.700 2.200 0 0 0 5.400 0zM828.600 315.800a2.700 2.200 0 0 0 5.400 0z" fill="#e0e0e0"/>
 <rect x="839.500" y="308.500" width="11.300" height="9" fill="#e0e0e0" stroke="#dcdcdc" stroke-width="1"/>
 <rect x="840" y="309" width="4.800" height="8" fill="#4a4a4a"/><path d="M845 311.700h5.500M845 314.400h5.500M848 309v8" stroke="#999" stroke-width=".6"/>
 <rect x="856.300" y="307.800" width="7.500" height="5.600" rx=".8" fill="#bdbdbd" stroke="#e0e0e0" stroke-width=".8"/>
 <circle cx="859" cy="310.600" r="1.600" fill="#6a6a6a"/>
 <circle cx="865" cy="314.300" r="4" fill="#9c9c9c" stroke="#e0e0e0" stroke-width="1.100"/><circle cx="865" cy="314.300" r="1.900" fill="#c8c8c8"/>
 <circle cx="880.300" cy="310.500" r="3.300" fill="#e6e6e6"/><circle cx="877.600" cy="314.700" r="3.300" fill="#d6d6d6"/><circle cx="883" cy="314.700" r="3.300" fill="#dedede"/>
 <path d="M880.300 311.600v2.600l-2 1.600M880.300 314.200l2 1.600" stroke="#555" stroke-width="1"/>
 <rect x="892.300" y="308.500" width="11.200" height="9" fill="#4f4f4f" stroke="#dcdcdc" stroke-width="1"/>
 <path d="M896 308.500v9M899.800 308.500v9M892.300 311.500h11.200M892.300 314.500h11.200" stroke="#cfcfcf" stroke-width=".9"/>
 <!-- row 3 -->
 <rect x="813.200" y="328.500" width="11.500" height="8.700" fill="#4e4e4e" stroke="#e0e0e0" stroke-width="1.200"/>
 <path d="M816 335.200c0-3.500 2.500-5 6-5 0 3.500-2.500 5-6 5z" fill="#e6e6e6"/>
 <rect x="831" y="328.500" width="11.500" height="8.700" fill="url(#gd)" stroke="#d6d6d6" stroke-width="1.200"/>
 <rect x="848.500" y="328.500" width="11.300" height="8.700" fill="#f0f0f0" stroke="#dcdcdc" stroke-width="1.200"/>
 <path d="M849 335.500c3-1 4-3.500 10.300-5.500v3c-5 1.500-6 3.500-10.300 4.700z" fill="#333"/>
 <rect x="866.300" y="328.500" width="11.300" height="8.700" fill="#bdbdbd" stroke="#d6d6d6" stroke-width="1.200"/>
 <path d="M866.300 328.500l5.600 4.300-5.600 4.400zM877.600 328.500l-5.600 4.300 5.600 4.400z" fill="#6f6f6f"/>
 <rect x="883.500" y="328.500" width="11.500" height="8.700" fill="url(#gh)" stroke="#c9c9c9" stroke-width="1.200"/>
</svg>
<div class="a" style="left:776.500px;top:264.5px;width:0.800px;height:81.5px;background:#444;"></div>

<!-- ===== layers panel ===== -->
<div class="a" style="left:776.500px;top:348px;width:223.500px;height:107px;background:#535353;"></div>
<div class="a" style="left:776.500px;top:348px;width:223.500px;height:13px;background:#353535;"></div>
<div class="a" style="left:776.500px;top:348px;width:27.500px;height:13.500px;background:#535353;border-right:1px solid #3a3a3a;"></div>
<div class="a" style="left:804.500px;top:348px;width:27px;height:13px;background:#404040;border-right:1px solid #2e2e2e;"></div>
<span class="t" style="left:782.77px;top:336.12px;font-size:8.8px;color:#e4e4e4;transform:scaleX(0.9697);">图层</span>
<span class="t" style="left:810.77px;top:336.50px;font-size:8.8px;color:#7c7c7c;transform:scaleX(0.9118);">通道</span>
<svg style="left:986px;top:352.500px;" width="11" height="6" viewBox="0 0 11 6"><path d="M0 1h4.200l-2.100 2.600z" fill="#bcbcbc"/><path d="M5 .700h5.500M5 2.600h5.500M5 4.500h5.500" stroke="#b4b4b4" stroke-width="1"/></svg>
<!-- filter row -->
<div class="dd" style="left:781px;top:364px;width:50px;height:14px;"></div>
<svg style="left:784.500px;top:366.500px;" width="9" height="9" viewBox="0 0 9 9" fill="none"><circle cx="5.200" cy="3.500" r="2.600" stroke="#e8e8e8" stroke-width="1.300"/><path d="M3.300 5.400l-2.600 2.800" stroke="#e8e8e8" stroke-width="1.600"/></svg>
<span class="t" style="left:796.26px;top:351.38px;font-size:8.8px;color:#ececec;transform:scaleX(0.9706);">选定</span>
<svg style="left:824.500px;top:367px;" width="5" height="8" viewBox="0 0 5 8"><path d="M0.300 3l2.200-2.700 2.200 2.700zM0.300 4.800l2.200 2.700 2.200-2.700z" fill="#e0e0e0"/></svg>
<div class="a" style="left:944px;top:365px;width:6px;height:6.300px;background:#e2b25e;"></div>
<div class="a" style="left:944px;top:371.300px;width:6px;height:6px;background:#2b2c42;"></div>
<div class="a" style="left:777px;top:381px;width:217px;height:1px;background:#5e5e5e;"></div>
<div class="a" style="left:777px;top:402.500px;width:217px;height:1px;background:#5b5b5b;"></div>
<div class="a" style="left:993.500px;top:362px;width:1px;height:62px;background:#5e5e5e;"></div>
<div class="a" style="left:994.500px;top:362px;width:5.500px;height:62px;background:#4b4b4b;"></div>
<!-- blend row -->
<div class="dd" style="left:781px;top:385px;width:80px;height:14px;"></div>
<span class="t" style="left:786.76px;top:372.38px;font-size:8.8px;color:#ececec;transform:scaleX(0.9552);">正常</span>
<svg style="left:853.500px;top:388.300px;" width="5" height="8" viewBox="0 0 5 8"><path d="M0.300 3l2.200-2.700 2.200 2.700zM0.300 4.800l2.200 2.700 2.200-2.700z" fill="#e0e0e0"/></svg>
<span class="t" style="left:865.97px;top:372.88px;font-size:8.8px;color:#ececec;transform:scaleX(1.0548);">不透明度:</span>
<div class="inp" style="left:909.300px;top:385px;width:26.500px;height:14.300px;"></div>
<span class="t" style="left:911.53px;top:372.38px;font-size:8.6px;color:#ececec;transform:scaleX(0.9412);">100%</span>
<div class="a" style="left:935.500px;top:385.500px;width:13.500px;height:13.500px;background:linear-gradient(#737373,#666);border:1px solid #3a3a3a;"></div>
<svg style="left:940.300px;top:391.500px;" width="5" height="3" viewBox="0 0 5 3"><path d="M0.300 0.200h4l-2 2.500z" fill="#f0f0f0"/></svg>
<!-- lock row -->
<span class="t" style="left:781.73px;top:391.88px;font-size:8.8px;color:#ececec;transform:scaleX(1.0909);">锁定:</span>
<svg style="left:808px;top:406px;" width="60" height="13" viewBox="808 406 60 13" fill="none">
 <rect x="809" y="408.500" width="8.600" height="8.600" fill="#8a8a8a"/><path d="M809 408.500h4.300v4.300h-4.300zM813.300 412.800h4.300v4.300h-4.300z" fill="#6e6e6e"/>
 <path d="M835.600 408.200l-6 6.300" stroke="#8e8e8e" stroke-width="1.500" stroke-linecap="round"/><path d="M830 414l-1 2-3.800.800 2-1.700.700-1.900z" fill="#8e8e8e" stroke="#8e8e8e" stroke-width=".6"/>
 <path d="M845.500 408.500v8M841.500 412.500h8" stroke="#e0e0e0" stroke-width="1.100"/>
 <path d="M845.500 407.200l1.700 2h-3.400zM845.500 417.800l1.700-2h-3.400zM840.200 412.500l2-1.700v3.400zM850.800 412.500l-2-1.700v3.400z" fill="#e0e0e0"/>
 <rect x="857.700" y="411.300" width="8" height="5.800" rx=".6" fill="#e8e8e8"/><path d="M859.500 411.500v-1.700a2.200 2.200 0 0 1 4.400 0v1.700" stroke="#e8e8e8" stroke-width="1.300"/><rect x="861" y="413" width="1.400" height="2.400" fill="#555"/>
</svg>
<span class="t" style="left:884.74px;top:392.88px;font-size:8.8px;color:#ececec;transform:scaleX(1.0390);">填充:</span>
<div class="inp" style="left:909.300px;top:405.700px;width:26.500px;height:14px;"></div>
<span class="t" style="left:911.53px;top:392.88px;font-size:8.6px;color:#ececec;transform:scaleX(0.9412);">100%</span>
<div class="a" style="left:935.500px;top:406px;width:13.500px;height:13.500px;background:linear-gradient(#737373,#666);border:1px solid #3a3a3a;"></div>
<svg style="left:940.300px;top:412px;" width="5" height="3" viewBox="0 0 5 3"><path d="M0.300 0.200h4l-2 2.500z" fill="#f0f0f0"/></svg>
<!-- layer row -->
<div class="a" style="left:776.500px;top:422.500px;width:213px;height:1.500px;background:#3e3e3e;"></div>
<div class="a" style="left:776.500px;top:424px;width:51px;height:31px;background:#4d4d4d;"></div>
<div class="a" style="left:827px;top:424px;width:161px;height:31px;background:#6a7f9c;"></div>
<svg style="left:783.500px;top:434px;" width="11" height="8" viewBox="0 0 11 8"><path d="M.500 4c1.500-2.600 3.200-3.500 5-3.500s3.500.900 5 3.500c-1.500 2.600-3.200 3.500-5 3.500s-3.500-.900-5-3.500z" fill="#d0d0d0"/><circle cx="5.500" cy="4" r="2" fill="#3a3a3a"/><circle cx="4.800" cy="3.300" r=".7" fill="#ddd"/></svg>
<!-- thumbnail -->
<div class="a" style="left:800.300px;top:425px;width:27px;height:27px;background:#f2f2f2;"></div>
<div class="a" style="left:801.500px;top:426.200px;width:24.600px;height:24.600px;background:#1a1a1a;"></div>
<div class="a" style="left:803px;top:427.700px;width:21.600px;height:21.600px;background-color:#fff;background-image:linear-gradient(45deg,#cfcfcf 25%,transparent 25%,transparent 75%,#cfcfcf 75%),linear-gradient(45deg,#cfcfcf 25%,transparent 25%,transparent 75%,#cfcfcf 75%);background-size:5.400px 5.400px;background-position:0 0,2.700px 2.700px;"></div>
<div class="a" style="left:815.500px;top:440.500px;width:11.800px;height:11.500px;background:#8a9bb2;border-left:1.500px solid #1a1a1a;border-top:1.500px solid #1a1a1a;"></div>
<div class="a" style="left:818.500px;top:443.500px;width:5.500px;height:5.500px;background:#6f8196;border:0.800px solid #d4d9e0;"></div>
<span class="t" style="left:838.31px;top:420.88px;font-size:8.8px;color:#f4f4f4;transform:scaleX(0.7551);">椭圆 1</span>
<!-- scrollbar -->
<div class="a" style="left:988px;top:424px;width:10px;height:31px;background:#3d3d3d;"></div>
<svg style="left:990.800px;top:428.500px;" width="5" height="4" viewBox="0 0 5 4"><path d="M.200 3.600l2.300-3.200 2.300 3.200z" fill="#d8d8d8"/></svg>
<div class="a" style="left:990px;top:438.500px;width:6.500px;height:20px;background:linear-gradient(90deg,#808080,#6a6a6a);border-radius:3px 3px 0 0;"></div>
<!-- watermark -->
<svg style="left:760px;top:420px;" width="200" height="35" viewBox="760 420 200 35">
 <g fill="#e4e8ee" fill-opacity=".93">
  <ellipse cx="835.200" cy="444.600" rx="6.500" ry="8.500"/>
  <ellipse cx="847.600" cy="432" rx="6" ry="8.100"/>
  <ellipse cx="863.600" cy="433.500" rx="6.800" ry="8.500"/>
  <ellipse cx="873.800" cy="448" rx="6.400" ry="7.400"/>
  <ellipse cx="854.500" cy="461" rx="11.500" ry="14.300"/>
 </g>
 <text x="766.500" y="477.300" font-family="'Liberation Sans','Noto Sans CJK SC',sans-serif" font-weight="bold" font-size="39" fill="#dcdcdc" fill-opacity=".9" textLength="61" lengthAdjust="spacingAndGlyphs">Bai</text>
 <text x="883" y="477.500" font-family="'Liberation Sans','Noto Sans CJK SC',sans-serif" font-weight="bold" font-size="33" fill="#dcdcdc" fill-opacity=".9" textLength="58" lengthAdjust="spacingAndGlyphs">经验</text>
</svg>
<div class="a" style="left:776.500px;top:361px;width:0.800px;height:62.5px;background:#444;"></div>

</div>
</body>
</html>
